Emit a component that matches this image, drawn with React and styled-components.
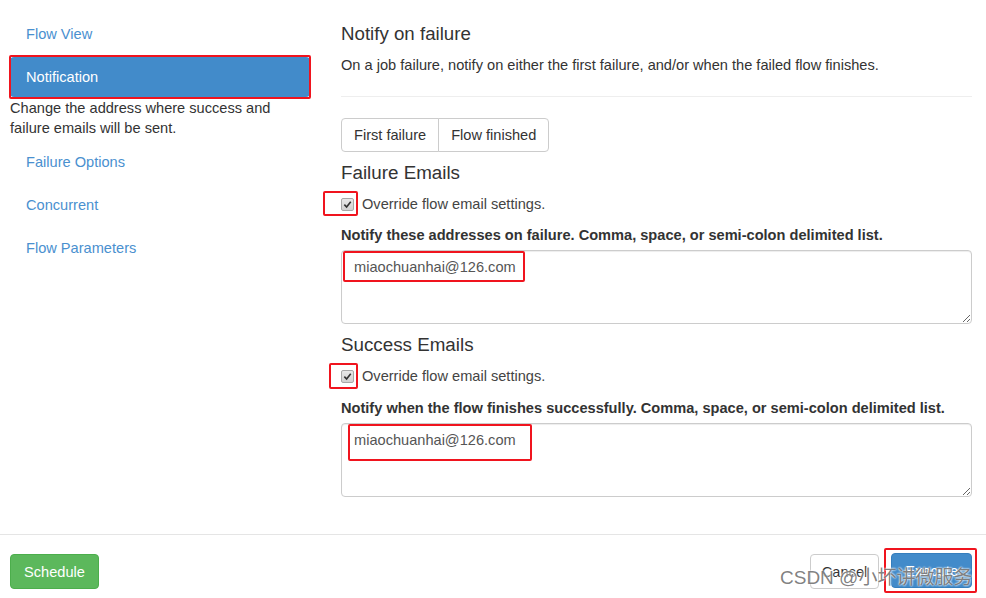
import React from 'react';
import styled, { createGlobalStyle } from 'styled-components';

const GlobalStyle = createGlobalStyle`
  html, body {
    margin: 0;
    padding: 0;
    background: #fff;
  }
  * {
    box-sizing: border-box;
  }
`;

const navItems = [
  { label: 'Flow View' },
  {
    label: 'Notification',
    active: true,
    hint: 'Change the address where success and failure emails will be sent.',
  },
  { label: 'Failure Options' },
  { label: 'Concurrent' },
  { label: 'Flow Parameters' },
];

// red marks drawn over the screenshot
const marks = [
  { left: 9, top: 55, width: 302, height: 44 },
  { left: 323, top: 191, width: 35, height: 25 },
  { left: 343, top: 251, width: 182, height: 31 },
  { left: 329, top: 363, width: 29, height: 26 },
  { left: 348, top: 424, width: 184, height: 37 },
  { left: 884, top: 548, width: 93, height: 45 },
];

function Check() {
  return (
    <CheckBox>
      <svg width="9" height="9" viewBox="0 0 10 10">
        <path d="M1.5 5.2 L4 7.8 L8.6 2" fill="none" stroke="#333" strokeWidth="1.8" />
      </svg>
    </CheckBox>
  );
}

function EmailSection({ title, label, email, labelGap }) {
  return (
    <>
      <SectionTitle>{title}</SectionTitle>
      <CheckRow>
        <Check />
        <span>Override flow email settings.</span>
      </CheckRow>
      <FieldLabel $gap={labelGap}>{label}</FieldLabel>
      <EmailBox readOnly value={email} />
    </>
  );
}

export default function App() {
  return (
    <Page>
      <GlobalStyle />
      <Main>
        <Nav>
          {navItems.map((item) => (
            <NavGroup key={item.label}>
              <NavLink $active={item.active}>{item.label}</NavLink>
              {item.hint && <NavHint>{item.hint}</NavHint>}
            </NavGroup>
          ))}
        </Nav>
        <Content>
          <Title>Notify on failure</Title>
          <Lead>
            On a job failure, notify on either the first failure, and/or when the failed flow
            finishes.
          </Lead>
          <Rule />
          <BtnGroup>
            <GroupBtn>First failure</GroupBtn>
            <GroupBtn>Flow finished</GroupBtn>
          </BtnGroup>
          <EmailSection
            title="Failure Emails"
            label="Notify these addresses on failure. Comma, space, or semi-colon delimited list."
            email="miaochuanhai@126.com"
            labelGap={11}
          />
          <EmailSection
            title="Success Emails"
            label="Notify when the flow finishes successfully. Comma, space, or semi-colon delimited list."
            email="miaochuanhai@126.com"
            labelGap={12}
          />
        </Content>
      </Main>
      <Footer>
        <Button $kind="success">Schedule</Button>
        <FooterRight>
          <Button>Cancel</Button>
          <Button $kind="primary">Execute</Button>
        </FooterRight>
      </Footer>
      {marks.map((m, i) => (
        <Mark key={i} style={{ left: m.left, top: m.top, width: m.width, height: m.height }} />
      ))}
      <Watermark>CSDN @小坏讲微服务</Watermark>
    </Page>
  );
}

const Page = styled.div`
  position: relative;
  width: 986px;
  height: 598px;
  overflow: hidden;
  font-family: 'Liberation Sans', Arial, sans-serif;
  font-size: 14.6px;
  color: #333;
`;

const Main = styled.div`
  display: grid;
  grid-template-columns: 300px 631px;
  column-gap: 31px;
  padding: 0 14px 0 10px;
`;

const Nav = styled.div`
  display: flex;
  flex-direction: column;
  gap: 3px;
  padding-top: 14px;
`;

const NavGroup = styled.div`
  display: flex;
  flex-direction: column;
`;

const NavLink = styled.div`
  height: 40px;
  line-height: 41px;
  padding: 0 16px;
  border-radius: 4px;
  color: ${(p) => (p.$active ? '#fff' : '#4a90cf')};
  background: ${(p) => (p.$active ? '#428bca' : 'transparent')};
`;

const NavHint = styled.div`
  line-height: 20px;
  padding-top: 1px;
  margin-bottom: 1px;
  color: #333;
  width: 290px;
`;

const Content = styled.div`
  display: flex;
  flex-direction: column;
  align-items: flex-start;
  padding-top: 22px;
`;

const Title = styled.div`
  font-size: 18.7px;
  line-height: 24px;
`;

const Lead = styled.div`
  margin-top: 9px;
  line-height: 20px;
`;

const Rule = styled.div`
  align-self: stretch;
  margin-top: 21px;
  height: 1px;
  background: #eee;
`;

const BtnGroup = styled.div`
  display: flex;
  margin-top: 21px;
`;

const GroupBtn = styled.div`
  height: 34px;
  line-height: 33px;
  padding: 0 12px;
  border: 1px solid #ccc;
  background: #fff;
  &:first-child {
    border-radius: 4px 0 0 4px;
  }
  & + & {
    margin-left: -1px;
    border-radius: 0 4px 4px 0;
  }
`;

const SectionTitle = styled.div`
  margin-top: 9px;
  font-size: 18.8px;
  line-height: 24px;
`;

const CheckRow = styled.div`
  display: flex;
  align-items: center;
  gap: 8px;
  margin-top: 9px;
  line-height: 20px;
  color: #444;
`;

const CheckBox = styled.span`
  display: flex;
  align-items: center;
  justify-content: center;
  width: 13px;
  height: 13px;
  border: 1px solid #a8a8a8;
  border-radius: 2px;
  background: linear-gradient(#e8e8e8, #d2d2d2);
`;

const FieldLabel = styled.div`
  margin-top: ${(p) => p.$gap}px;
  line-height: 20px;
  font-weight: bold;
`;

const EmailBox = styled.textarea`
  align-self: stretch;
  margin-top: 5px;
  height: 74px;
  padding: 6px 12px;
  border: 1px solid #ccc;
  border-radius: 4px;
  font-family: inherit;
  font-size: 14.6px;
  line-height: 21px;
  color: #555;
  resize: vertical;
  outline: none;
  box-shadow: inset 0 1px 1px rgba(0, 0, 0, 0.075);
`;

const Footer = styled.div`
  display: flex;
  justify-content: space-between;
  align-items: flex-start;
  margin-top: 37px;
  border-top: 1px solid #e5e5e5;
  padding: 19px 14px 0 10px;
`;

const FooterRight = styled.div`
  display: flex;
  gap: 12px;
  align-items: flex-start;
`;

const Button = styled.div`
  height: 35px;
  line-height: 34px;
  padding: 0 ${(p) => (p.$kind ? '13px' : '11px')};
  border-radius: 4px;
  border: 1px solid
    ${(p) => (p.$kind === 'success' ? '#4cae4c' : p.$kind === 'primary' ? '#357ebd' : '#ccc')};
  background: ${(p) =>
    p.$kind === 'success' ? '#5cb85c' : p.$kind === 'primary' ? '#428bca' : '#fff'};
  color: ${(p) => (p.$kind ? '#fff' : '#333')};
  margin-top: ${(p) => (p.$kind === 'primary' ? '-1px' : '0')};
`;

const Mark = styled.div`
  position: absolute;
  border: 2px solid #f0141e;
  border-radius: 2px;
  pointer-events: none;
`;

const Watermark = styled.div`
  position: absolute;
  left: 780px;
  top: 566px;
  font-family: 'Liberation Sans', 'Noto Sans CJK SC', sans-serif;
  font-size: 19px;
  line-height: 24px;
  color: rgba(95, 95, 95, 0.8);
  text-shadow: 0 0 2px #fff, 0 0 2px #fff;
  pointer-events: none;
`;
